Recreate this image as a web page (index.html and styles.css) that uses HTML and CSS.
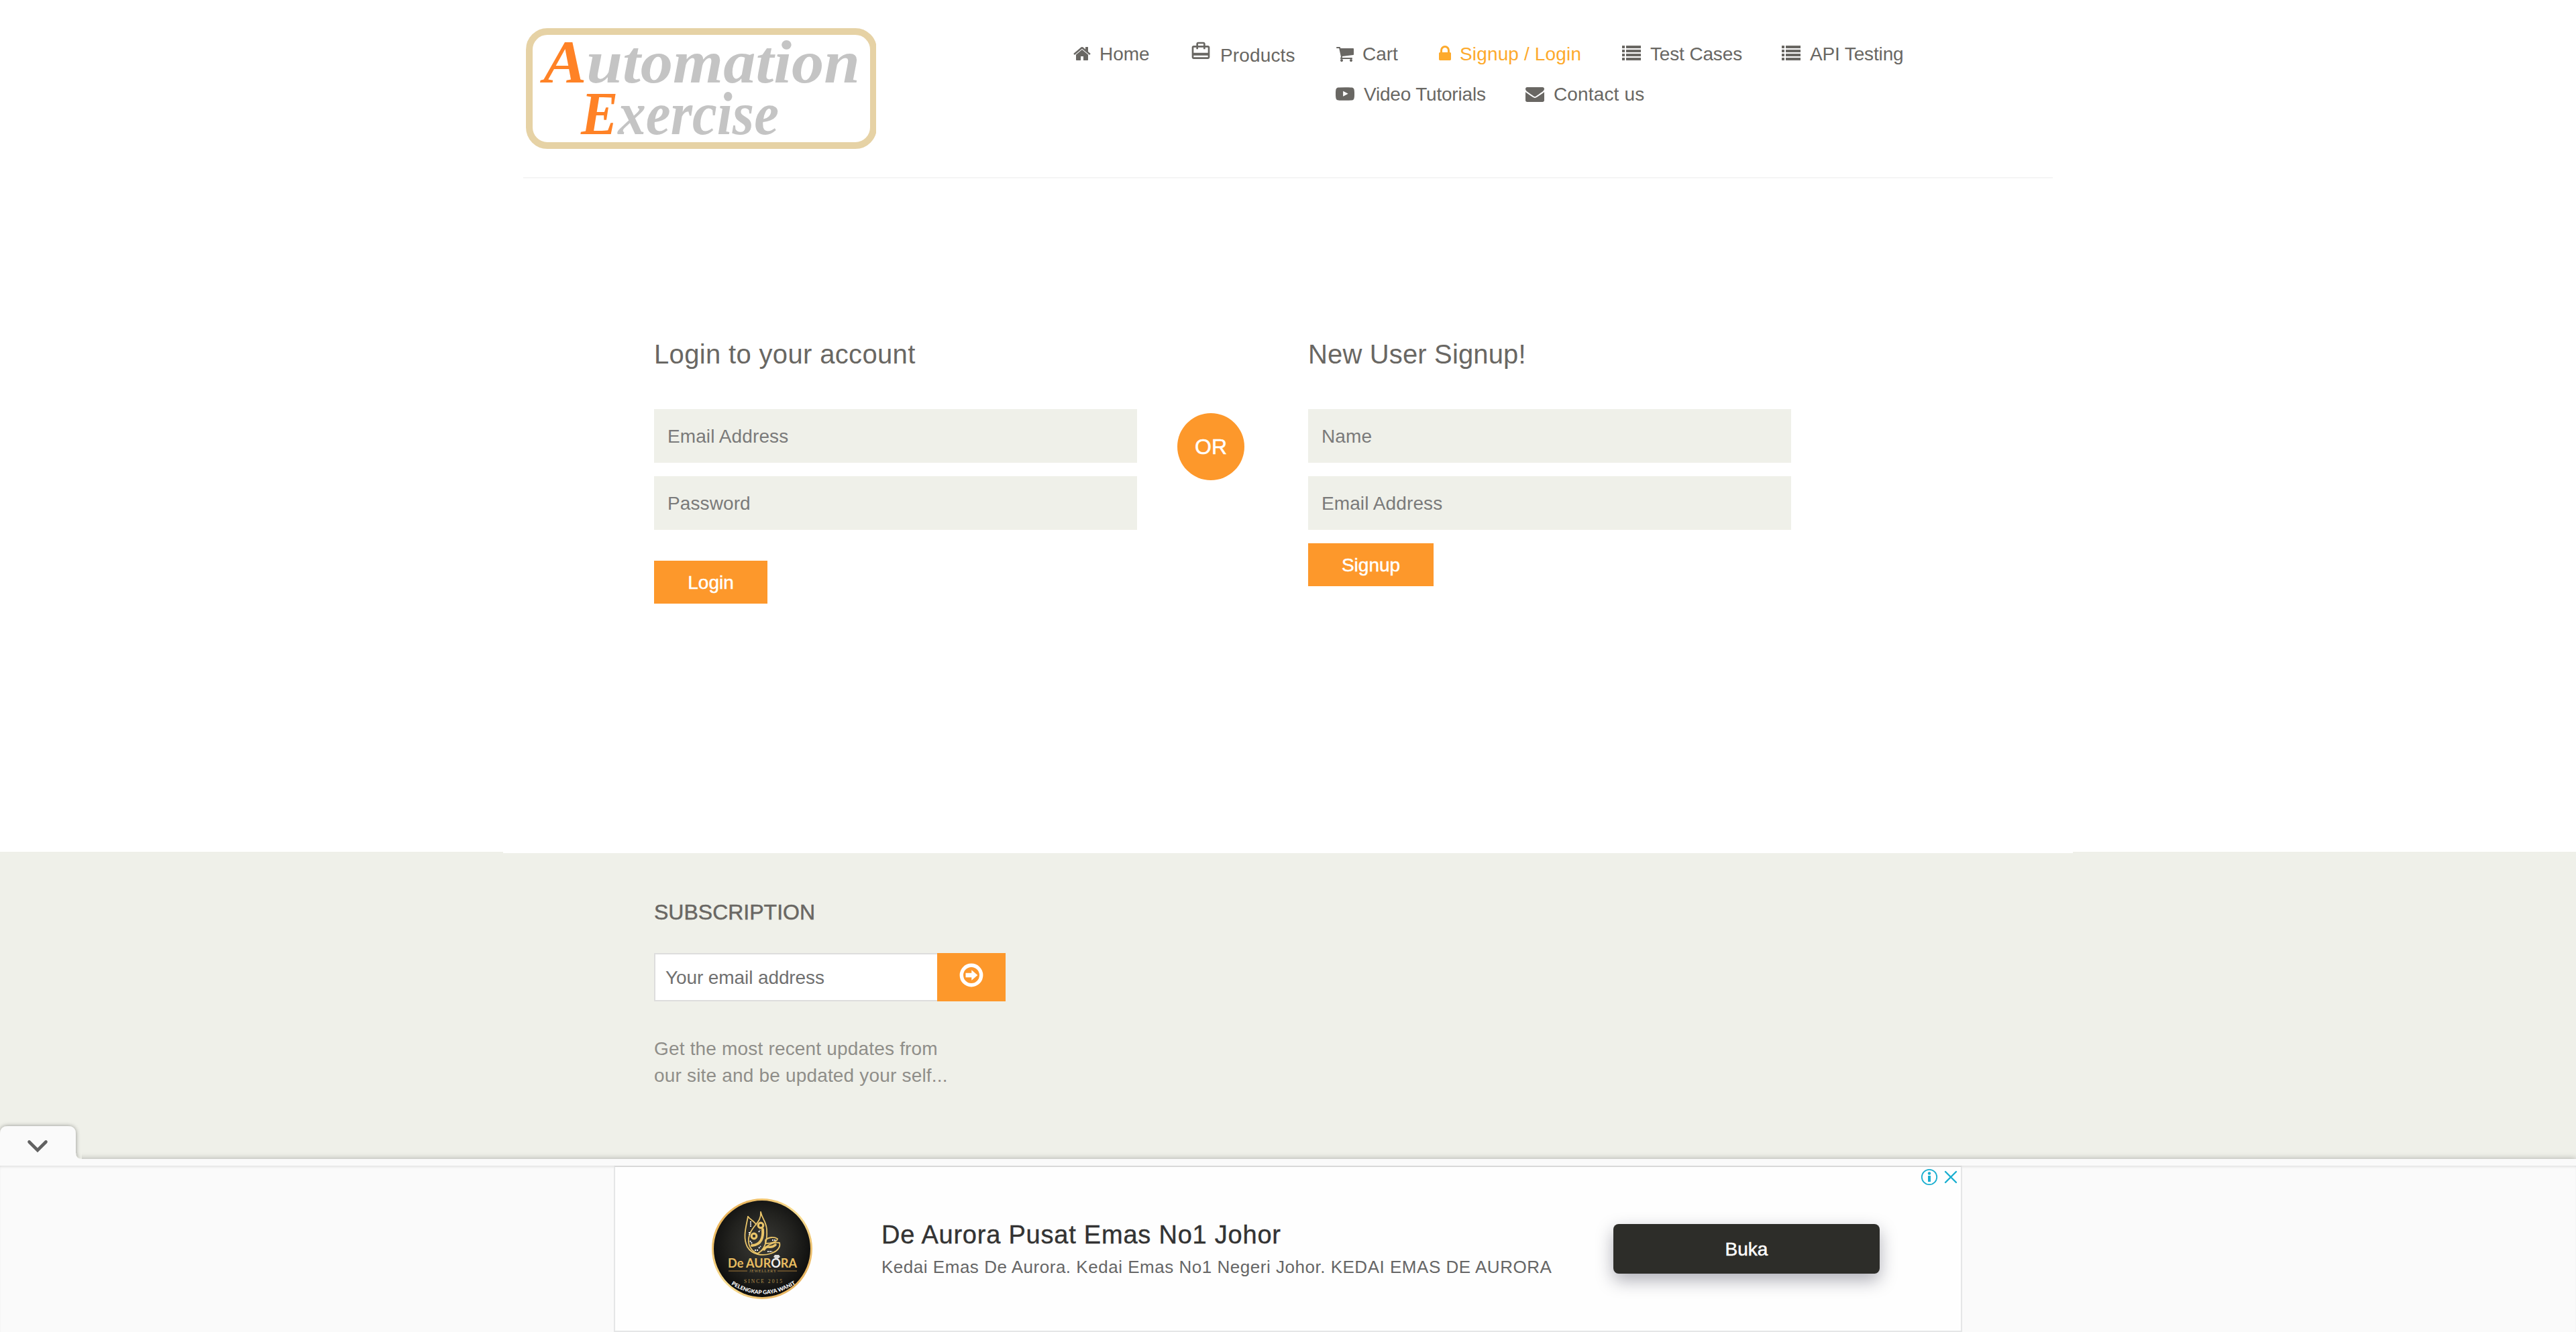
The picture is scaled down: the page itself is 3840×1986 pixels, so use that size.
FILE: index.html
```html
<!DOCTYPE html>
<html lang="en">
<head>
<meta charset="utf-8">
<title>Automation Exercise - Signup / Login</title>
<link rel="stylesheet" href="styles.css">
</head>
<body>
<svg class="sprite" width="0" height="0" aria-hidden="true">
  <symbol id="i-list" viewBox="0 0 1792 1792"><path d="M0 128h256v256H0zM384 128h1408v256H384zM0 512h256v256H0zM384 512h1408v256H384zM0 896h256v256H0zM384 896h1408v256H384zM0 1280h256v256H0zM384 1280h1408v256H384z"/></symbol>
</svg>

<header class="header">
  <a class="logo" aria-label="Automation Exercise">
    <svg width="522" height="180" viewBox="0 0 522 180">
      <rect x="5" y="5" width="513" height="170" rx="27" fill="#fff" stroke="#e6d2a5" stroke-width="10"/>
      <g class="logo-text">
        <text x="26" y="81" font-size="90" textLength="472" lengthAdjust="spacingAndGlyphs"><tspan class="logo-cap">A</tspan>utomation</text>
        <text x="82" y="158" font-size="90" textLength="295" lengthAdjust="spacingAndGlyphs"><tspan class="logo-cap">E</tspan>xercise</text>
      </g>
    </svg>
  </a>
  <ul class="nav">
    <li class="w-home"><svg class="ico" viewBox="0 0 1792 1792"><path d="M1472 992v480q0 26-19 45t-45 19h-384v-384h-256v384h-384q-26 0-45-19t-19-45v-480q0-1 .5-3t.5-3l575-474 575 474q1 2 1 6zm223-69l-62 74q-8 9-21 11h-3q-13 0-21-7l-692-577-692 577q-12 8-24 7-13-2-21-11l-62-74q-8-10-7-23.5t11-21.5l719-599q32-26 76-26t76 26l244 204v-195q0-14 9-23t23-9h192q14 0 23 9t9 23v408l219 182q10 8 11 21.5t-7 23.5z"/></svg><span>Home</span></li>
    <li class="w-products"><svg class="ico bag" viewBox="0 0 24 24"><path d="M20 6h-3V4c0-1.11-.89-2-2-2H9c-1.11 0-2 .89-2 2v2H4c-1.11 0-2 .89-2 2v11c0 1.11.89 2 2 2h16c1.11 0 2-.89 2-2V8c0-1.11-.89-2-2-2zM9 4h6v2H9V4zm11 15H4v-2h16v2zm0-5H4V8h3v2h2V8h6v2h2V8h3v6z"/></svg><span>Products</span></li>
    <li class="w-cart"><svg class="ico" viewBox="0 0 1792 1792"><path d="M704 1536q0 52-38 90t-90 38-90-38-38-90 38-90 90-38 90 38 38 90zm896 0q0 52-38 90t-90 38-90-38-38-90 38-90 90-38 90 38 38 90zm128-1088v512q0 24-16.5 42.5t-40.5 21.5l-1044 122q13 60 13 70 0 16-24 64h920q26 0 45 19t19 45-19 45-45 19h-1024q-26 0-45-19t-19-45q0-11 8-31.5t16-36 21.5-40 15.5-29.5l-177-823h-204q-26 0-45-19t-19-45 19-45 45-19h256q16 0 28.5 6.5t19.5 15.5 13 24.5 8 26 5.5 29.5 4.5 26h1201q26 0 45 19t19 45z"/></svg><span>Cart</span></li>
    <li class="w-login active"><svg class="ico" viewBox="0 0 1792 1792"><path d="M640 768h512v-192q0-106-75-181t-181-75-181 75-75 181v192zm832 96v576q0 40-28 68t-68 28h-960q-40 0-68-28t-28-68v-576q0-40 28-68t68-28h32v-192q0-184 132-316t316-132 316 132 132 316v192h32q40 0 68 28t28 68z"/></svg><span>Signup / Login</span></li>
    <li class="w-cases"><svg class="ico"><use href="#i-list"/></svg><span>Test Cases</span></li>
    <li class="w-api"><svg class="ico"><use href="#i-list"/></svg><span>API Testing</span></li>
    <li class="w-video"><svg class="ico" viewBox="0 0 1792 1792"><path d="M711 1128l484-250-484-253v503zm185-862q168 0 324.5 4.5t229.5 9.5l73 4q1 0 17 1.5t23 3 23.5 4.5 28.5 8 28 13 31 19.5 29 26.5q6 6 15.5 18.5t29 58.5 26.5 101q8 64 12.5 136.5t5.5 113.5v176q1 145-18 290-7 55-25 99.5t-32 61.5l-14 17q-14 15-29 26.5t-31 19-28 12.5-28.5 8-24 4.5-23 3-16.5 1.5q-251 19-627 19-207-2-359.5-6.5t-200.5-7.5l-49-4-36-4q-36-5-54.5-10t-51-21-56.5-41q-6-6-15.5-18.5t-29-58.5-26.5-101q-8-64-12.5-136.5t-5.5-113.5v-176q-1-145 18-290 7-55 25-99.5t32-61.5l14-17q14-15 29-26.5t31-19.5 28-13 28.5-8 23.5-4.5 23-3 17-1.5q251-18 627-18z"/></svg><span>Video Tutorials</span></li>
    <li class="w-contact"><svg class="ico" viewBox="0 0 1792 1792"><path d="M1792 710v794q0 66-47 113t-113 47h-1472q-66 0-113-47t-47-113v-794q44 49 101 87 362 246 497 345 57 42 92.5 65.5t94.5 48 110 24.5h2q51 0 110-24.5t94.5-48 92.5-65.5q170-123 498-345 57-39 100-87zm0-294q0 79-49 151t-122 123q-376 261-468 325-10 7-42.5 31t-54 38.5-52 32.5-57.5 27-50 9h-2q-23 0-50-9t-57.5-27-52-32.5-54-38.5-42.5-31q-91-64-262-182.5t-205-142.5q-62-42-117-115.5t-55-136.5q0-78 41.5-130t118.5-52h1472q65 0 112.5 47t47.5 113z"/></svg><span>Contact us</span></li>
  </ul>
</header>

<main class="forms">
  <form class="form">
    <h2 class="login-title">Login to your account</h2>
    <input type="email" placeholder="Email Address">
    <input type="password" placeholder="Password">
    <button class="btn btn-login" type="button">Login</button>
  </form>
  <div class="or">OR</div>
  <form class="form">
    <h2>New User Signup!</h2>
    <input type="text" placeholder="Name">
    <input type="email" placeholder="Email Address">
    <button class="btn btn-signup" type="button">Signup</button>
  </form>
</main>

<footer class="footer">
  <div class="footer-edge"></div>
  <div class="subscribe">
    <h2>Subscription</h2>
    <form class="sub-form">
      <input type="email" placeholder="Your email address">
      <button type="button" aria-label="Subscribe">
        <svg width="36" height="36" viewBox="0 0 36 36"><circle cx="18" cy="18" r="14.7" fill="none" stroke="#fff" stroke-width="5.4"/><path fill="#fff" d="M9.500 14.800h8.800v-4.600l9 7.800-9 7.800v-4.600H9.500z"/></svg>
      </button>
    </form>
    <p>Get the most recent updates from<br>our site and be updated your self...</p>
  </div>
</footer>

<aside class="anchor-ad">
  <svg class="tab" width="150" height="68" viewBox="0 0 150 68">
    <defs><filter id="tab-shadow" x="-20%" y="-20%" width="140%" height="140%"><feDropShadow dx="0" dy="0" stdDeviation="3" flood-color="#000" flood-opacity=".4"/></filter></defs>
    <path filter="url(#tab-shadow)" fill="#fafafa" d="M0 68V31q0-12 12-12h89q12 0 12 12v28q0 9 9 9z"/>
    <path d="M43.500 42.500L56 55l12.500-12.500" fill="none" stroke="#616161" stroke-width="4.600" stroke-linecap="round"/>
  </svg>
  <div class="strip"></div>
  <div class="ad-area">
    <div class="ad">
      <svg class="ad-logo" width="150" height="150" viewBox="0 0 150 150">
        <defs>
          <linearGradient id="gold" x1="0" y1="0" x2="1" y2="1"><stop offset="0" stop-color="#e6a545"/><stop offset=".5" stop-color="#f8df94"/><stop offset="1" stop-color="#e0a048"/></linearGradient>
          <radialGradient id="dark" cx=".5" cy=".45" r=".55"><stop offset="0" stop-color="#3b3b37"/><stop offset=".6" stop-color="#22221f"/><stop offset="1" stop-color="#0d0d0c"/></radialGradient>
          <path id="arc" d="M29 128Q76 157 124 128"/>
        </defs>
        <circle cx="75" cy="75" r="75" fill="url(#gold)"/>
        <circle cx="75" cy="75" r="72" fill="url(#dark)"/>
        <g fill="none" stroke="#e9c469" stroke-width="1.800" stroke-linecap="round" stroke-linejoin="round">
          <path d="M73 20C74 34 64 38 58 50C52 62 54 76 68 82C80 76 83 62 82 46C81 34 75 30 73 20z"/>
          <path d="M54 27C51 43 46 58 53 72C60 84 75 86 88 82C98 79 103 72 101 66C92 64 82 70 74 78"/>
          <path d="M54 27C59 33 64 34 66 39"/>
          <path d="M80 62C85 57 93 57 98 60C97 65 88 67 80 67z"/>
          <path d="M78 76C83 68 88 76 95 69" stroke-width="3.500"/>
          <circle cx="73" cy="40" r="3.800" stroke-width="3.200"/>
          <circle cx="63" cy="56" r="3.800" stroke-width="3.200"/>
          <path d="M60 70C74 69 77 58 76 46" stroke-width="4"/>
        </g>
        <path d="M58 34v9M56 50v4M57 63l3 4M83 79h7M90 62h5M70 50l2-3M70 74l3-3M64 77h5" stroke="#eee" stroke-width="2" stroke-dasharray="2 1"/>
        <text class="brand" x="24" y="103" font-size="19" textLength="103" lengthAdjust="spacingAndGlyphs">De AUR<tspan fill="#f2f2f2">O</tspan>RA</text>
        <path d="M94 84h6l2 3-5 4-5-4z" fill="#ddd"/>
        <path d="M25 108h28M98 108h29" stroke="#a67b38" stroke-width="1"/>
        <text class="serif" x="56" y="110" font-size="6" textLength="40">JEWELLERY</text>
        <text class="serif" x="48" y="126" font-size="7.500" textLength="57">SINCE 2015</text>
        <text class="motto" font-size="8"><textPath href="#arc" textLength="107" lengthAdjust="spacingAndGlyphs">PELENGKAP GAYA WANITA</textPath></text>
      </svg>
      <div class="ad-copy">
        <div class="ad-title">De Aurora Pusat Emas No1 Johor</div>
        <div class="ad-sub">Kedai Emas De Aurora. Kedai Emas No1 Negeri Johor. KEDAI EMAS DE AURORA</div>
      </div>
      <div class="ad-cta">Buka</div>
      <svg class="ad-choices" width="56" height="26" viewBox="0 0 56 26" fill="none" stroke="#1aafd0">
        <circle cx="13" cy="13" r="11.200" stroke-width="1.800"/>
        <circle cx="13" cy="7.500" r="2.200" fill="#1aafd0" stroke="none"/>
        <path d="M13 11v9" stroke-width="4"/>
        <path d="M37 5l16 16M53 5L37 21" stroke-width="2.400" stroke-linecap="round"/>
      </svg>
    </div>
  </div>
</aside>
</body>
</html>
```
FILE: styles.css
```css
* { box-sizing: border-box; }

body {
  margin: 0;
  height: 1986px;
  overflow: hidden;
  background: #fff;
  color: #696763;
  font-family: "Liberation Sans", Arial, Helvetica, sans-serif;
  font-size: 28px;
  line-height: 40px;
}

h2, p, ul { margin: 0; padding: 0; font-weight: 400; }
input, button { font: inherit; border: 0; border-radius: 0; outline: 0; }
input::placeholder { color: #7a7a7a; opacity: 1; }
.sprite { display: block; position: absolute; }

/* Header */
.header {
  display: flex;
  width: 2280px;
  height: 266px;
  margin: 0 auto;
  padding: 42px 0 0 4px;
  border-bottom: 2px solid #f5f5f5;
}
.logo { width: 815px; }
.logo svg { display: block; }
.logo-text {
  font-family: "Liberation Serif", "Times New Roman", serif;
  font-weight: 700;
  font-style: italic;
  fill: #c4c4c4;
}
.logo-cap { fill: #ff8226; }

.nav {
  display: flex;
  flex-wrap: wrap;
  align-content: flex-start;
  row-gap: 20px;
  width: 1300px;
  padding-top: 18px;
  list-style: none;
}
.nav li { display: flex; align-items: center; height: 40px; white-space: nowrap; }
.nav span { padding-top: 2px; }
.nav .active { color: #fdaa2c; }
.ico { flex: none; width: 28px; height: 28px; margin-right: 12px; fill: currentColor; }
.w-home { width: 175px; }
.w-products { width: 217px; letter-spacing: .15px; }
.w-products .bag { width: 32px; height: 32px; margin: 0 13px 8px 0; }
.nav .w-products span { padding-top: 5px; }
.w-cart { width: 149px; }
.w-login { width: 278px; letter-spacing: .15px; }
.w-login .ico { margin-right: 8px; }
.w-cases { width: 238px; letter-spacing: -.15px; }
.w-cases .ico, .w-api .ico { margin-right: 14px; }
.w-api { width: 200px; letter-spacing: -.15px; }
.w-video { width: 283px; margin-left: 392px; letter-spacing: -.2px; }
.w-video .ico { margin-right: 14px; }
.w-contact { letter-spacing: .15px; }
.w-contact .ico { margin-right: 14px; }

/* Forms */
.forms {
  display: flex;
  width: 1890px;
  height: 1004px;
  margin: 0 auto;
  padding-top: 242px;
}
.form { display: flex; flex-direction: column; align-items: flex-start; width: 720px; }
.form h2 { margin-bottom: 62px; font-size: 40px; letter-spacing: .15px; }
.form .login-title { letter-spacing: .34px; }
.form input {
  width: 720px;
  height: 80px;
  margin-bottom: 20px;
  padding: 2px 20px 0;
  background: #eff0e9;
  letter-spacing: .1px;
}
.btn, .or {
  background: #fd982b;
  color: #fff;
  text-align: center;
  -webkit-text-stroke: .5px #fff;
}
.btn { height: 64px; padding: 1px 0 0; }
.btn-login { width: 169px; margin-top: 26px; }
.btn-signup { width: 187px; }
.or {
  width: 100px;
  height: 100px;
  margin: 108px 95px 0 60px;
  border-radius: 50%;
  font-size: 32px;
  line-height: 100px;
}

/* Footer */
.footer { height: 716px; background: #eff0e9; }
.footer-edge { width: 2340px; height: 2px; margin: 0 auto; background: #fff; }
.subscribe { width: 1890px; margin: 0 auto; padding-top: 68px; }
.subscribe h2 {
  font-size: 32px;
  text-transform: uppercase;
  -webkit-text-stroke: .5px currentColor;
}
.sub-form { display: flex; margin: 41px 0 51px; }
.sub-form input {
  width: 422px;
  height: 72px;
  padding: 1px 15px 0;
  border: 2px solid #ddd;
  border-right: 0;
  background: #fff;
  letter-spacing: -.1px;
}
.sub-form input::placeholder { color: #707070; }
.sub-form button { display: flex; justify-content: center; width: 102px; height: 72px; padding: 15px 0 0; background: #fd982b; }
.subscribe p { color: #8f8e89; letter-spacing: .18px; }

/* Anchored ad */
.anchor-ad { position: fixed; left: 0; right: 0; bottom: 0; height: 258px; }
.tab { position: absolute; left: 0; top: -68px; }
.strip { height: 10px; background: #fafafa; box-shadow: 0 0 10px rgba(0, 0, 0, .3); clip-path: inset(-20px 0 0 122px); box-shadow: 0 0 10px rgba(0, 0, 0, .3); }
.anchor-ad { background: #fafafa; }
.ad-area {
  position: relative;
  height: 248px;
  background: #fafafa;
  box-shadow: inset 0 3px 4px -2px rgba(0, 0, 0, .14);
}
.ad {
  position: relative;
  display: flex;
  align-items: center;
  width: 2010px;
  height: 248px;
  margin: 0 auto;
  padding-left: 144px;
  border: 2px solid #e5e6e7;
  border-top-color: #d8d8d8;
  background: #fefefe;
}
.ad-logo { flex: none; }
.brand { font-family: Lato, sans-serif; font-weight: 700; fill: #e9bd60; }
.serif { font-family: "Liberation Serif", serif; fill: #b9954e; }
.motto { font-family: Lato, sans-serif; font-weight: 900; fill: #fff; }
.ad-copy { width: 1091px; margin-left: 103px; white-space: nowrap; }
.ad-title { height: 46px; padding-top: 4px; font-size: 38px; letter-spacing: .78px; color: #333; -webkit-text-stroke: .4px #333; }
.ad-sub { height: 44px; padding-top: 6px; font-size: 26px; letter-spacing: .52px; color: #666; }
.ad-cta {
  width: 397px;
  height: 74px;
  border-radius: 8px;
  background: #2d2d29;
  box-shadow: 0 10px 26px rgba(25, 25, 50, .35);
  color: #fff;
  line-height: 75px;
  text-align: center;
  -webkit-text-stroke: .5px #fff;
}
.ad-choices { position: absolute; right: 4px; top: 2px; }
```
